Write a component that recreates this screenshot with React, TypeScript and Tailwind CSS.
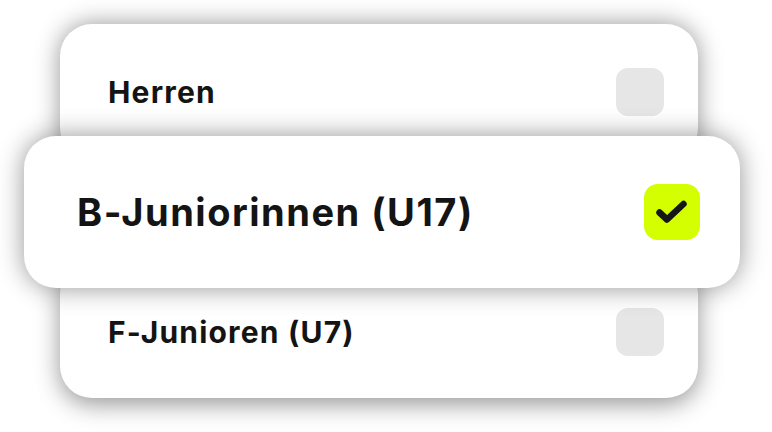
type Size = 'sm' | 'lg';

function Box({ checked, size }: { checked: boolean; size: Size }) {
  if (checked) {
    return (
      <div className="h-[56px] w-[56px] shrink-0 rounded-[14px] bg-[#d4ff00]">
        <svg width="56" height="56" viewBox="0 0 56 56" fill="none">
          <path d="M15.5 28.5 L23 35.5 L39.5 20" stroke="#161616" strokeWidth="6.5" strokeLinecap="round" strokeLinejoin="round" />
        </svg>
      </div>
    );
  }
  return (
    <div
      className={
        size === 'sm'
          ? 'h-[48px] w-[48px] shrink-0 rounded-[12px] bg-[#e6e6e6]'
          : 'h-[56px] w-[56px] shrink-0 rounded-[14px] bg-[#e6e6e6]'
      }
    />
  );
}

export default function App() {
  return (
    <div className="h-[432px] w-[772px] overflow-hidden bg-white font-['Inter',sans-serif] text-[#141414]">
      <div className="flex flex-col items-start pl-[24px] pt-[24px]">
        {/* back card */}
        <div className="relative z-0 ml-[36px] flex h-[136px] w-[638px] items-start rounded-[32px] bg-white pt-[44px] pl-[48px] pr-[34px] shadow-[0_0_24px_rgba(0,0,0,0.42)]">
          <div className="flex h-[48px] w-full items-center justify-between">
            <span className="text-[30px] font-bold leading-none tracking-[0.04em]">Herren</span>
            <Box checked={false} size="sm" />
          </div>
        </div>

        {/* active card */}
        <div className="relative z-10 -mt-[24px] flex h-[152px] w-[716px] items-center justify-between rounded-[32px] bg-white pl-[53px] pr-[40px] shadow-[0_0_26px_rgba(0,0,0,0.42)]">
          <span className="text-[38px] font-bold leading-none tracking-[0.04em]">B-Juniorinnen (U17)</span>
          <Box checked size="lg" />
        </div>

        {/* back card */}
        <div className="relative z-0 -mt-[26px] ml-[36px] flex h-[136px] w-[638px] items-end rounded-[32px] bg-white pb-[42px] pl-[48px] pr-[34px] shadow-[0_6px_24px_rgba(0,0,0,0.42)]">
          <div className="flex h-[48px] w-full items-center justify-between">
            <span className="text-[30px] font-bold leading-none tracking-[0.04em]">F-Junioren (U7)</span>
            <Box checked={false} size="sm" />
          </div>
        </div>
      </div>
    </div>
  );
}
